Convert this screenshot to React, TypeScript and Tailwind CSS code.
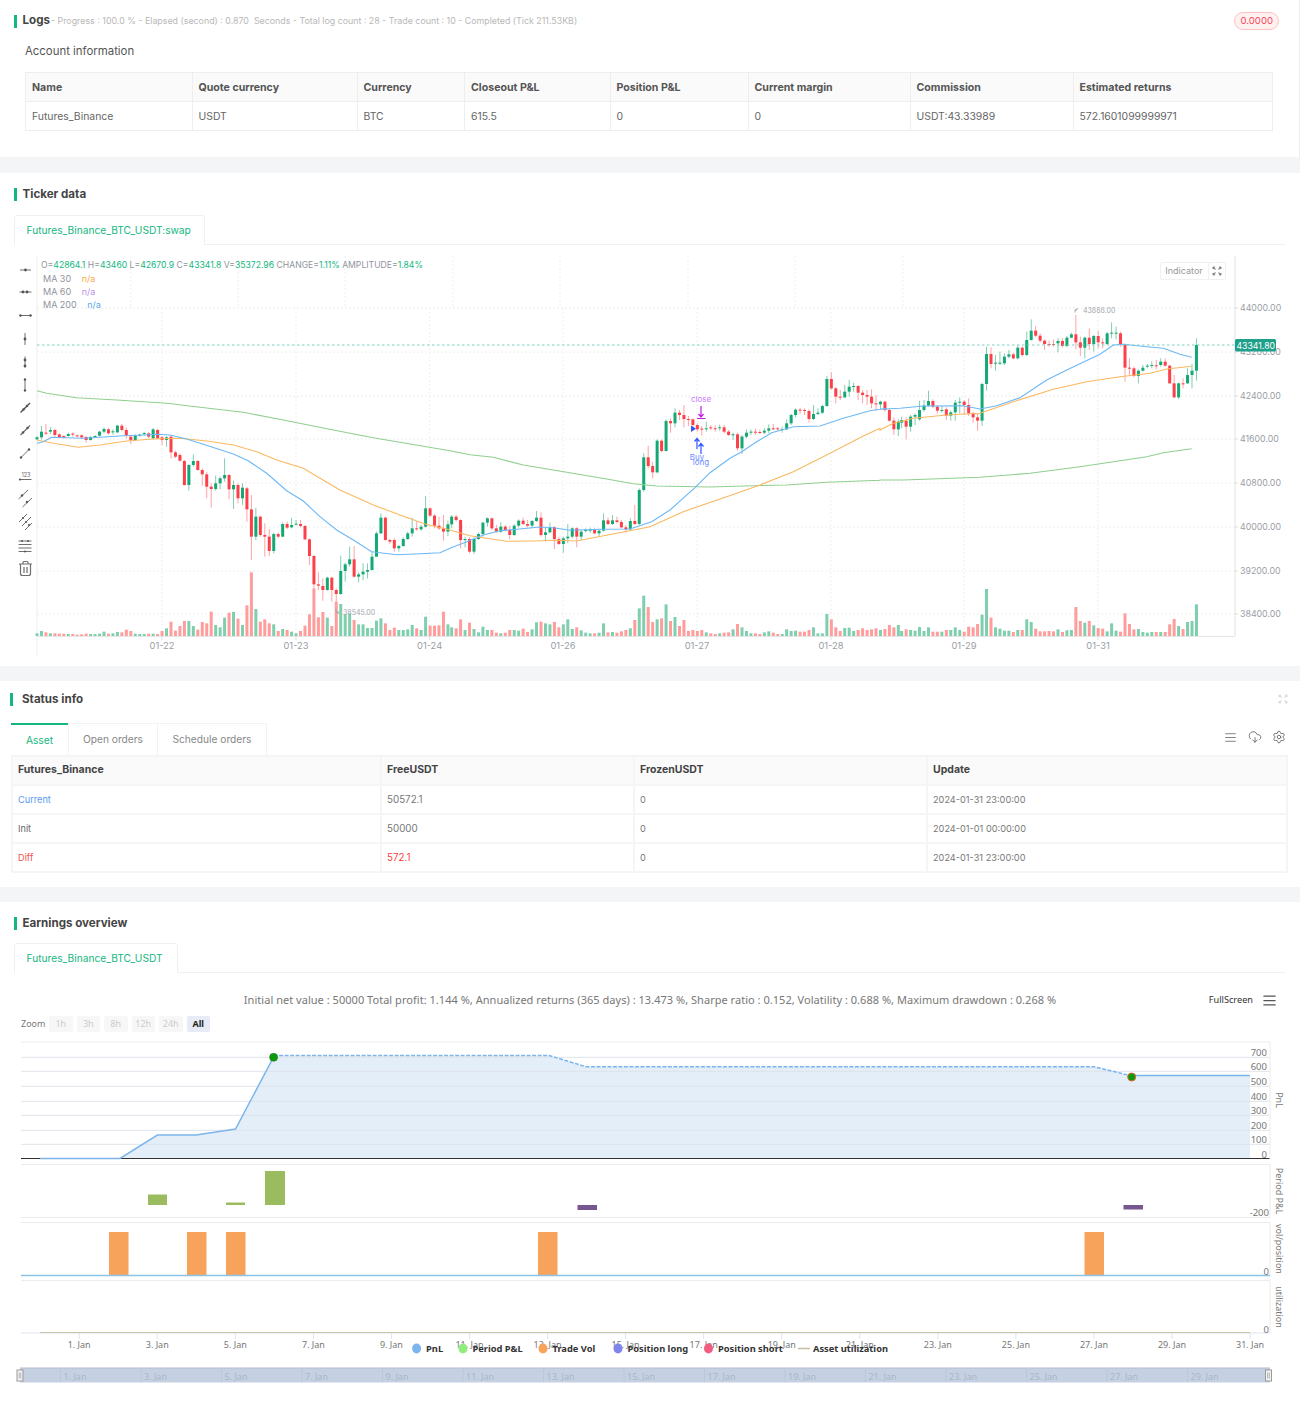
import { AlignJustify, CloudDownload, Settings } from "lucide-react";

type Bar = number[];

// candles traced from the chart: [open, close, high, low], screen units of each trace
const SEG_A: Bar[] = [
  [298,292,288,300],[292,275,258,298],[278,281,252,285],[275,270,262,282],[270,285,266,292],[283,292,280,295],[288,292,285,296],[288,282,278,290],[281,284,277,290],[286,288,284,292],
  [286,292,283,297],[291,300,288,308],[300,291,288,302],[290,288,285,292],[287,275,272,290],[275,267,262,280],[268,280,264,284],[276,274,268,284],[277,257,254,280],[257,270,252,274],
  [270,287,262,295],[290,300,286,312],[300,287,283,303],[286,284,281,290],[281,279,276,288],[280,290,276,295],[295,268,264,298],[270,295,266,298],[292,300,288,315],[300,292,288,320],
  [290,337,285,355],[337,350,332,355],[345,362,340,365],[363,435,360,437],[435,375,372,452],[375,363,343,380],[363,390,360,392],[390,403,385,437],[403,440,395,475],[440,447,430,503],
  [447,430,407,452],[430,415,410,448],[415,405,355,425],[405,448,402,478],[448,435,422,507],[435,475,430,490],[475,443,430,495],[445,508,440,545],[508,590,465,660],[590,530,503,600],
  [530,585,527,590],[585,590,550,650],[590,633,567,648],[633,582,578,640],[582,590,578,595],[590,552,548,592],[552,563,545,567],[562,555,533,565],[553,551,540,556],[552,558,540,562],
  [558,598,555,600],[598,648,595,675],[648,733,645,745],[733,737,697,750],[738,750,715,782],[750,713,710,752],[713,750,710,785],[750,762,745,800],[762,693,647,765],[693,673,668,725],
  [673,658,620,680],[658,710,618,712],[710,703,697,727],[703,695,670,720],[695,690,670,715],[690,650,635,692],[650,580,575,650],[580,533,520,582],[533,600,530,602],[600,605,597,612],
  [600,625,595,635],[625,618,615,635],[618,597,592,620],[597,580,575,600],[580,565,533,590],[565,567,545,572],[568,560,555,572],[560,505,468,562],[505,527,502,530],[527,557,522,565],
  [557,565,530,570],[565,575,525,602],[575,553,542,588],
];
const SEG_B: Bar[] = [
  [553,530,525,565],[530,540,525,545],[540,600,538,625],[600,597,590,622],[597,635,592,640],[635,597,593,642],[597,582,578,600],[582,548,545,590],[548,535,532,560],[535,565,532,570],
  [565,575,555,578],[575,560,547,578],[560,570,555,575],[570,585,557,598],[585,557,553,588],[557,542,538,562],[542,552,533,555],[552,557,540,562],[557,543,540,565],[543,533,513,546],
  [533,585,517,590],[585,577,563,605],[577,562,548,580],[562,597,558,627],[597,612,590,615],[612,595,590,638],[595,590,552,610],[590,565,562,595],[565,590,562,622],[590,575,570,600],
  [573,570,565,578],[571,569,563,578],[570,580,565,583],[580,572,568,590],[572,541,520,575],[541,552,532,555],[552,541,525,555],[541,546,530,550],[546,562,540,565],[562,568,555,578],
  [568,543,535,572],[543,552,495,555],[552,450,445,555],[450,352,340,455],[352,378,317,385],[378,397,365,415],[397,302,298,400],[302,333,298,337],[333,243,238,335],[243,250,235,278],
  [250,218,205,262],[218,225,210,240],[225,237,195,262],[237,238,228,258],[238,255,235,270],[255,268,250,275],[266,268,258,287],[268,265,245,275],[262,264,255,270],[265,267,256,275],
  [265,262,254,272],[262,275,255,280],[275,285,270,288],[285,283,278,300],[283,325,278,332],[325,290,285,342],[290,278,268,295],[278,275,268,285],[275,277,266,285],[276,278,268,282],
  [278,272,265,282],[272,265,253,280],[265,267,252,270],[265,268,260,272],[268,267,260,278],[268,250,238,270],[250,225,222,255],[225,209,205,232],[209,211,203,222],[210,213,205,225],
  [213,237,208,248],[237,222,195,240],[222,218,205,225],[218,198,195,222],[198,117,108,200],[117,145,97,150],[145,170,140,190],[170,172,150,180],[172,155,135,175],[155,140,120,170],
  [140,138,128,155],[138,158,135,180],[158,165,150,190],[165,170,150,195],[170,190,148,205],[190,193,165,212],[193,185,182,210],[185,210,182,215],[210,242,205,245],[242,268,232,285],
  [268,245,238,288],
];
const SEG_C: Bar[] = [
  [368,360,350,385],[362,380,352,418],[380,350,345,395],[350,345,340,375],[358,330,302,362],[330,317,300,335],[317,303,272,320],[303,320,298,325],[320,332,315,340],[332,330,318,338],
  [328,347,322,360],[347,337,332,362],[337,308,300,362],[308,305,292,340],[305,315,300,345],[315,340,295,348],[340,352,335,368],[352,362,340,392],[362,252,248,378],[252,162,140,272],
  [162,192,142,205],[190,188,165,212],[190,188,155,195],[190,170,160,195],[170,163,150,175],[163,175,158,178],[175,143,135,178],[143,165,140,170],[165,120,95,168],[120,92,58,122],
  [92,107,78,112],[107,122,100,128],[122,132,118,150],[132,133,122,140],[132,134,118,140],[130,123,115,157],[123,138,115,142],[138,113,108,142],[113,103,98,115],[103,127,45,148],
  [127,143,110,168],[143,113,110,175],[113,132,85,150],[132,108,105,155],[108,127,92,145],[127,130,115,145],[132,100,95,135],[100,98,67,115],[100,98,80,118],[100,135,95,140],
  [135,203,130,245],[203,205,175,225],[205,228,200,232],[228,212,208,250],[212,203,195,215],[200,197,192,205],[197,195,183,205],[196,198,180,208],[195,185,175,200],[185,197,175,200],
  [197,250,195,252],[250,292,225,295],[292,250,248,297],[250,252,235,265],[250,225,205,252],[225,212,192,265],[212,135,115,242],
];

const VOL_A = [
  880,873,877,880,880,881,881,882,882,884,883,881,882,882,881,875,881,880,876,877,869,873,881,882,882,881,881,882,873,865,
  845,872,858,843,843,858,869,846,850,815,855,862,833,818,816,836,855,796,
  697,807,845,838,850,853,873,867,870,875,880,873,857,823,745,832,816,833,858,785,792,822,820,840,853,853,864,864,842,835,850,870,863,870,870,868,855,865,870,830,857,857,856,815,853,
];
const VOL_B = [
  862,865,838,870,848,867,877,860,870,870,878,880,878,870,870,872,866,876,868,847,845,850,853,846,862,853,838,867,862,871,878,880,880,878,850,877,876,878,874,870,865,840,805,767,801,846,838,835,793,843,831,858,840,873,870,873,870,877,880,882,880,878,877,868,852,862,873,880,880,882,877,874,878,882,882,868,873,872,875,875,870,862,880,880,822,838,862,873,864,863,873,870,865,870,868,865,870,867,855,862,855,
];
const VOL_C = [
  993,988,990,992,981,993,982,995,995,995,990,990,982,990,995,980,982,972,944,867,953,982,986,992,992,996,990,990,958,966,986,994,994,993,994,988,996,991,990,921,963,968,963,976,984,986,994,970,992,995,940,972,988,987,996,998,996,996,996,996,973,957,978,987,966,963,913,
];

const STEP = 13.4 / 3;
const SEGS = [
  { bars: SEG_A, vols: VOL_A, x0: 37, off: 0 },
  { bars: SEG_B, vols: VOL_B, x0: 451.67, off: 0 },
  { bars: SEG_C, vols: VOL_C, x0: 901.67, off: 120 },
];

const toLine = (pts: number[][], xo: number, off = 0) =>
  pts.map(([x, y]) => `${(xo + x / 3).toFixed(1)},${(340 + (y - off) / 3).toFixed(1)}`).join(" ");

const MA30 = [
  toLine([[111,310],[130,305],[155,292],[250,295],[300,292],[370,287],[430,285],[470,283],[510,285],[560,297],[610,313],[700,342],[745,362],[800,400],[860,452],[910,483],[960,530],[1010,570],[1060,600],[1115,635],[1190,644],[1260,641],[1320,638],[1350,625]], 0),
  toLine([[50,605],[100,585],[150,572],[200,568],[270,561],[310,563],[360,571],[450,568],[540,567],[605,545],[660,510],[735,443],[780,398],[840,355],[875,335],[920,305],[965,278],[1030,260],[1110,258],[1180,235],[1260,212],[1310,205]], 450),
  toLine([[0,328],[60,325],[130,318],[250,317],[300,327],[350,317],[420,293],[500,240],[560,210],[660,163],[700,135],[730,133],[800,140],[850,145],[900,163],[935,172]], 880, 120),
].join(" ");
const MA60 = [
  toLine([[111,300],[160,310],[235,322],[300,315],[380,303],[460,297],[540,295],[620,303],[700,315],[770,335],[830,360],[910,385],[960,415],[1020,450],[1120,495],[1200,525],[1275,552],[1350,570]], 0),
  toLine([[60,587],[170,604],[250,603],[320,601],[380,603],[430,593],[520,576],[600,560],[700,515],[830,470],[930,435],[1030,395],[1130,345],[1240,288],[1290,265]], 450),
  toLine([[0,390],[40,370],[100,355],[200,345],[300,340],[400,305],[520,268],[620,245],[720,230],[810,220],[860,207],[935,199]], 880, 120),
].join(" ");
const MA200 = [
  toLine([[111,152],[140,160],[230,173],[350,180],[500,190],[600,202],[730,217],[850,240],[1000,270],[1120,293],[1350,332]], 0),
  toLine([[60,344],[130,352],[220,375],[350,397],[470,417],[550,431],[620,438],[780,441],[880,438],[1010,435],[1130,427],[1290,421]], 450),
  toLine([[0,540],[70,540],[300,532],[450,520],[600,500],[700,485],[800,470],[850,458],[935,446]], 880, 120),
].join(" ");

const PRICE_TICKS: [string, number][] = [["44000.00",308],["43200.00",352],["42400.00",396],["41600.00",439],["40800.00",483],["40000.00",527],["39200.00",571],["38400.00",614]];
const DATE_TICKS: [string, number][] = [["01-22",162],["01-23",296],["01-24",429.6],["01-26",563],["01-27",697],["01-28",831],["01-29",964],["01-31",1098]];
const TOP_GRID = [130.7, 238, 345, 453, 560, 688, 795, 903];

function ToolIcons() {
  const s = { stroke: "#6f6f6f", strokeWidth: 1, fill: "none" };
  const d = (cx: number, cy: number, r = 1.4) => <circle cx={cx} cy={cy} r={r} fill="#555" />;
  return (
    <g>
      <path d="M20 270h11" {...s} />{d(25.5, 270)}
      <path d="M19.5 292h12" {...s} />{d(23, 292)}{d(27, 292)}
      <path d="M19.5 315.5h12" {...s} />{d(20.5, 315.5, 1.2)}{d(30.5, 315.5, 1.2)}
      <path d="M25 333v12" {...s} />{d(25, 339)}
      <path d="M25 356.5v11" {...s} />{d(25, 360)}{d(25, 366)}
      <path d="M25 379v12" {...s} />{d(25, 379.5, 1.2)}{d(25, 390.5, 1.2)}
      <path d="M20.5 412.5l9.5-9.5" stroke="#555" strokeWidth={1.4} fill="none" />{d(23.5, 409.5, 1.2)}{d(27, 406, 1.2)}
      <path d="M20.5 435l9.5-9.5" {...s} strokeWidth={1.3} />{d(23, 432.5, 1.2)}{d(27.5, 428, 1.2)}
      <path d="M20.5 458l9-9" {...s} />{d(21, 457.5, 1.2)}{d(29, 449.5, 1.2)}
      <path d="M19.5 479.5h12" {...s} />{d(20, 479.5, 1.1)}
      <text x="26" y="477" fontSize="5.5" textAnchor="middle" fill="#666">123</text>
      <path d="M18.5 499l9.5-9M22.5 507l9.5-9" {...s} />{d(22, 495.5, 1.2)}{d(27, 502, 1.2)}
      <path d="M19 522l8-8M22 526l9-9M25 530l7-7" {...s} />{d(23, 518, 1.1)}{d(26, 522, 1.1)}{d(29, 525, 1.1)}
      <path d="M18.5 541h13M18.5 544.5h13M18.5 548h13M18.5 551.5h13" {...s} />{d(22, 541, 1)}{d(28, 541, 1)}{d(25, 551.5, 1)}
      <path d="M19 564h13M23 564v-1.5q0-1 1-1h3q1 0 1 1v1.5M20.5 564v9.5q0 2 2 2h6q2 0 2-2v-9.5M24 567v6M27 567v6" {...s} strokeWidth={1.2} />
    </g>
  );
}

function KLineChart() {
  return (
    <svg width={1300} height={405} viewBox="0 255 1300 405" className="block">
      {PRICE_TICKS.map(([, y]) => (
        <line key={y} x1={37} x2={1235} y1={y} y2={y} stroke="#eeeeee" strokeDasharray="2 2" />
      ))}
      {TOP_GRID.map((x) => (
        <line key={x} x1={x} x2={x} y1={256} y2={308} stroke="#efefef" strokeDasharray="2 2" />
      ))}
      {DATE_TICKS.map(([, x]) => (
        <line key={x} x1={x} x2={x} y1={308} y2={636} stroke="#efefef" strokeDasharray="2 2" />
      ))}
      <line x1={37} x2={37} y1={256} y2={656} stroke="#eeeeee" />
      <line x1={1235} x2={1235} y1={256} y2={636} stroke="#e2e2e2" />
      <line x1={37} x2={1235} y1={636.5} y2={636.5} stroke="#e6e6e6" />
      <ToolIcons />

      {SEGS.map((seg, si) =>
        seg.vols.map((v, i) => {
          const bar = seg.bars[i];
          const x = seg.x0 + i * STEP;
          const top = 340 + (v - seg.off) / 3;
          return (
            <rect key={`v${si}-${i}`} x={x - 1.5} y={top} width={3} height={636 - top} fill={bar[1] <= bar[0] ? "#7fcfae" : "#ff9c9c"} />
          );
        }),
      )}
      {SEGS.map((seg, si) =>
        seg.bars.map(([o, c, h, l], i) => {
          const x = seg.x0 + i * STEP;
          const y = (v: number) => 340 + (v - seg.off) / 3;
          const up = c <= o;
          const top = y(Math.min(o, c));
          return (
            <g key={`c${si}-${i}`}>
              <line x1={x} x2={x} y1={y(h)} y2={y(l)} stroke={up ? "#7fcfae" : "#ffa3a6"} />
              <rect x={x - 1.5} y={top} width={3} height={Math.max(1, Math.abs(c - o) / 3)} fill={up ? "#14a874" : "#fb4049"} />
            </g>
          );
        }),
      )}

      <polyline points={MA200} fill="none" stroke="#8fcf8f" strokeWidth={1.1} />
      <polyline points={MA60} fill="none" stroke="#fbb860" strokeWidth={1.1} />
      <polyline points={MA30} fill="none" stroke="#6cb8f6" strokeWidth={1.1} />

      <line x1={37} x2={1235} y1={345} y2={345} stroke="#7fd0c2" strokeDasharray="2.5 2.5" />
      {PRICE_TICKS.map(([label, y]) => (
        <g key={label}>
          <line x1={1235} x2={1238} y1={y} y2={y} stroke="#dddddd" />
          <text x={1240} y={y + 3.2} fontSize="8.8" fill="#9a9ea6">{label}</text>
        </g>
      ))}
      <rect x={1235} y={339} width={41} height={12.5} rx={1.5} fill="#1fa08a" />
      <text x={1236.5} y={348.5} fontSize="8.7" fill="#ffffff">43341.80</text>

      {DATE_TICKS.map(([label, x]) => (
        <g key={label}>
          <line x1={x} x2={x} y1={636} y2={640} stroke="#dddddd" />
          <text x={x} y={648.5} fontSize="9.3" textAnchor="middle" fill="#9a9ea6">{label}</text>
        </g>
      ))}

      <text x={1083} y={312.5} fontSize="7" fill="#a3a7ae">43888.00</text>
      <path d="M1075 312.5v-2.5h2M1075 310l3-1.5" stroke="#a3a7ae" fill="none" />
      <text x={343} y={614.5} fontSize="7" fill="#a3a7ae">38545.00</text>
      <path d="M336 609v3h3M336 612l3 1.5" stroke="#a3a7ae" fill="none" />

      <text x={701} y={402} fontSize="8" textAnchor="middle" fill="#c77dff">close</text>
      <path d="M701 406v11M698.5 414l2.5 3 2.5-3M697 418.5h8.5" stroke="#c020e0" strokeWidth={1.2} fill="none" />
      <path d="M691 425.5l5 3.2-5 3.2z" fill="#2f55ff" />
      <path d="M697 449v-10M694.5 441.5l2.5-3 2.5 3M701 454v-10M698.5 446.5l2.5-3 2.5 3" stroke="#2f55ff" strokeWidth={1.2} fill="none" />
      <text x={697} y={460} fontSize="8" textAnchor="middle" fill="#6e8cff">Buy</text>
      <text x={701} y={465} fontSize="8" textAnchor="middle" fill="#6e8cff">long</text>
    </svg>
  );
}

function SectionTitle({ title, barLeft, titleLeft = "ml-[5.5px]", children }: { title: string; barLeft: string; titleLeft?: string; children?: React.ReactNode }) {
  return (
    <div className={`flex h-[18px] items-center ${barLeft}`}>
      <span className="h-[13px] w-[3px] shrink-0 bg-[#13b77f]" />
      {children ? children : <h2 className={`${titleLeft} mt-[1px] text-[11.6px] font-bold text-[#444]`}>{title}</h2>}
    </div>
  );
}

function ExpandIcon({ color }: { color: string }) {
  return (
    <svg width="10" height="10" viewBox="0 0 10 10" fill="none" stroke={color} strokeWidth="1.1">
      <path d="M1 1l2.5 2.5M1 1h2M1 1v2M9 1L6.5 3.5M9 1H7M9 1v2M1 9l2.5-2.5M1 9h2M1 9V7M9 9L6.5 6.5M9 9H7M9 9V7" />
    </svg>
  );
}

const ACCOUNT_COLS = ["w-[166.5px]", "w-[165px]", "w-[107.5px]", "w-[145.5px]", "w-[138px]", "w-[162px]", "w-[163px]", "w-auto"];
const ACCOUNT_HEAD = ["Name", "Quote currency", "Currency", "Closeout P&L", "Position P&L", "Current margin", "Commission", "Estimated returns"];
const ACCOUNT_ROW = ["Futures_Binance", "USDT", "BTC", "615.5", "0", "0", "USDT:43.33989", "572.1601099999971"];

const ASSET_ROWS = [
  { name: "Current", nameCls: "text-[#5a9cf0]", free: "50572.1", freeCls: "text-[#777]", update: "2024-01-31 23:00:00" },
  { name: "Init", nameCls: "text-[#666]", free: "50000", freeCls: "text-[#777]", update: "2024-01-01 00:00:00" },
  { name: "Diff", nameCls: "text-[#f0524f]", free: "572.1", freeCls: "text-[#fa3f3f]", update: "2024-01-31 23:00:00" },
];

const GRID_Y = [1057.3, 1071.3, 1086.3, 1101.3, 1115.3, 1130.3, 1144.3];
const PNL_LABELS: [string, number][] = [["700",1056],["600",1070],["500",1085],["400",1100],["300",1114],["200",1129],["100",1143],["0",1158]];
const DAYS = [1,3,5,7,9,11,13,15,17,19,21,23,25,27,29,31];
const NAV_DAYS = [1,3,5,7,9,11,13,15,17,19,21,23,25,27,29];
const dayX = (d: number) => 79.2 + (d - 1) * 39.03;

function EarningsChart() {
  const paneEdge = "#ececec";
  const labelFont = "'Noto Sans', sans-serif";
  return (
    <svg width={1300} height={364} viewBox="0 1040 1300 364" className="block" style={{ fontFamily: labelFont }}>
      {/* pnl pane */}
      <path d="M40 1158.5H120L157.4 1135H196L235.5 1129L273.6 1056H549L586 1066.7H1094L1132 1076L1250 1075.5V1158.5Z" fill="#e4eef9" />
      <line x1={21} x2={1270} y1={1042} y2={1042} stroke={paneEdge} />
      {GRID_Y.map((y) => (
        <line key={y} x1={21} x2={1270} y1={y} y2={y} stroke="#dfe3e8" />
      ))}
      <line x1={21} x2={1270} y1={1158.5} y2={1158.5} stroke="#333" />
      <line x1={1270} x2={1270} y1={1042} y2={1159} stroke={paneEdge} />
      <path d="M40 1158.5H120L157.4 1135H196L235.5 1129L273.6 1057" fill="none" stroke="#7cb5ec" strokeWidth={1.5} />
      <path d="M273.6 1055.5H549L586 1066.7H1094L1132 1076" fill="none" stroke="#7cb5ec" strokeWidth={1.5} strokeDasharray="4 1.5" />
      <path d="M1132 1075.5H1250" fill="none" stroke="#7cb5ec" strokeWidth={1.5} />
      <circle cx={273.6} cy={1057.3} r={4} fill="#0a9a0a" stroke="#2a7a2a" strokeWidth={0.6} />
      <circle cx={1131.7} cy={1077} r={4} fill="#0a9a0a" stroke="#e0653a" strokeWidth={1} />
      {PNL_LABELS.map(([l, y]) => (
        <text key={l} x={1267} y={y} fontSize="9.5" textAnchor="end" fill="#777">{l}</text>
      ))}

      {/* period pnl pane */}
      <path d="M21 1164.5H1270V1217.5H21" fill="none" stroke={paneEdge} />
      <rect x={148} y={1194.5} width={19} height={10.5} fill="#9bbb5f" />
      <rect x={226} y={1202.5} width={19} height={2.5} fill="#9bbb5f" />
      <rect x={265} y={1171} width={20} height={34} fill="#9bbb5f" />
      <rect x={577.5} y={1205} width={19.5} height={5} fill="#76578f" />
      <rect x={1123.5} y={1205} width={19.5} height={4.5} fill="#76578f" />
      <text x={1269} y={1216} fontSize="9.5" textAnchor="end" fill="#777">-200</text>

      {/* vol pane */}
      <path d="M21 1222.5H1270V1275.5" fill="none" stroke={paneEdge} />
      {[109, 187, 226, 538, 1084.5].map((x) => (
        <rect key={x} x={x} y={1232} width={19.5} height={43.5} fill="#f7a35c" />
      ))}
      <line x1={21} x2={1270} y1={1275.5} y2={1275.5} stroke="#8cc4e6" strokeWidth={1.3} />
      <text x={1269} y={1275} fontSize="9.5" textAnchor="end" fill="#777">0</text>

      {/* utilization pane */}
      <path d="M21 1280.5H1270V1333" fill="none" stroke={paneEdge} />
      <line x1={21} x2={1270} y1={1333} y2={1333} stroke="#dde3f0" />
      <line x1={40} x2={1250} y1={1332.5} y2={1332.5} stroke="#c9c4a8" strokeWidth={1.2} />
      <text x={1269} y={1333} fontSize="9.5" textAnchor="end" fill="#777">0</text>

      {DAYS.map((d) => (
        <g key={d}>
          <line x1={dayX(d)} x2={dayX(d)} y1={1333} y2={1339} stroke="#dde3f0" />
          <text x={dayX(d)} y={1348} fontSize="9" textAnchor="middle" fill="#777">{`${d}. Jan`}</text>
        </g>
      ))}

      {([["PnL", 1100], ["Period P&L", 1191], ["vol/position", 1249], ["utilization", 1307]] as [string, number][]).map(([l, y]) => (
        <text key={l} x={1276} y={y} fontSize="9" textAnchor="middle" fill="#777" transform={`rotate(90 1276 ${y})`}>{l}</text>
      ))}

      {/* legend */}
      {([["PnL", 416.6, "#7cb5ec"], ["Period P&L", 463, "#90ed7d"], ["Trade Vol", 543, "#f7a35c"], ["Position long", 618, "#8085e9"], ["Position short", 708.5, "#f15c80"]] as [string, number, string][]).map(([l, x, c]) => (
        <g key={l}>
          <ellipse cx={x} cy={1348.5} rx={4.5} ry={5} fill={c} />
          <text x={x + 9.5} y={1352} fontSize="9.3" fontWeight={700} fill="#333">{l}</text>
        </g>
      ))}
      <line x1={798} x2={810} y1={1348.5} y2={1348.5} stroke="#c5bd9b" strokeWidth={1.5} />
      <text x={813} y={1352} fontSize="9.3" fontWeight={700} fill="#333">Asset utilization</text>

      {/* navigator */}
      <rect x={20} y={1368} width={1250} height={14.5} fill="#c5d1e3" />
      <line x1={20} x2={1270} y1={1368} y2={1368} stroke="#b3bdcc" />
      {NAV_DAYS.map((d, i) => (
        <g key={d}>
          <line x1={60.5 + i * 80.5} x2={60.5 + i * 80.5} y1={1368} y2={1382} stroke="#bcc8da" />
          <text x={63.5 + i * 80.5} y={1380} fontSize="9" fill="#aab6c9">{`${d}. Jan`}</text>
        </g>
      ))}
      {[17, 1265.5].map((x) => (
        <g key={x}>
          <rect x={x} y={1370} width={6} height={11} fill="#f4f4f4" stroke="#999" />
          <path d={`M${x + 2.2} 1372.5v6M${x + 3.8} 1372.5v6`} stroke="#999" strokeWidth={0.7} />
        </g>
      ))}
    </svg>
  );
}

export default function App() {
  return (
    <div className="flex min-h-[1404px] w-[1300px] flex-col bg-[#f4f5f7] font-['Inter',sans-serif] text-[10.4px] text-[#666]">
      {/* logs */}
      <section className="mb-[16px] h-[157px] border-r border-[#eeeeee] bg-white pt-[12px]">
        <div className="flex h-[18px] items-center justify-between pr-[20px]">
          <SectionTitle title="Logs" barLeft="ml-[14px]">
            <h2 className="ml-[5.5px] text-[11.6px] font-bold text-[#444]">Logs</h2>
            <span className="ml-[1px] text-[8.85px] text-[#b8b8b8]">- Progress : 100.0 % - Elapsed (second) : 0.870&nbsp; Seconds - Total log count : 28 - Trade count : 10 - Completed (Tick 211.53KB)</span>
          </SectionTitle>
          <span className="rounded-full border border-[#ffc2c2] bg-[#fff1f0] px-[5px] py-[1px] text-[9.6px] leading-[14px] text-[#f5475b]">0.0000</span>
        </div>
        <p className="ml-[25px] mt-[12px] h-[18px] text-[11.4px] leading-[18px] text-[#555]">Account information</p>
        <div className="ml-[25px] mt-[12px] w-[1248px]">
          <table className="w-full table-fixed border-collapse">
            <thead>
              <tr className="bg-[#fafafa]">
                {ACCOUNT_HEAD.map((h, i) => (
                  <th key={h} className={`${ACCOUNT_COLS[i]} h-[29px] border border-[#eeeeee] px-[6px] pt-[2px] text-left text-[10.6px] font-bold text-[#555]`}>{h}</th>
                ))}
              </tr>
            </thead>
            <tbody>
              <tr>
                {ACCOUNT_ROW.map((c, i) => (
                  <td key={i} className="h-[29px] border border-[#eeeeee] px-[6px] pt-[2px]">{c}</td>
                ))}
              </tr>
            </tbody>
          </table>
        </div>
      </section>

      {/* ticker */}
      <section className="mb-[15px] h-[493px] bg-white pt-[12px]">
        <SectionTitle title="Ticker data" barLeft="ml-[14px]" />
        <div className="ml-[13.5px] mr-[15px] mt-[12px] flex h-[30px]">
          <div className="flex w-[191.5px] items-center rounded-t-[3px] border border-b-0 border-[#f0f0f0] pl-[12px] text-[10.2px] text-[#13b77f]">Futures_Binance_BTC_USDT:swap</div>
          <div className="flex-1 border-b border-[#f0f0f0]" />
        </div>
        <div className="relative mt-[10px]">
          <KLineChart />
          <div className="absolute left-[41px] top-[4px] text-[9px] leading-[13px] text-[#8f949c]">
            <p className="whitespace-nowrap text-[8.65px]">
              O=<span className="text-[#13b77f]">42864.1</span> H=<span className="text-[#13b77f]">43460</span> L=<span className="text-[#13b77f]">42670.9</span> C=<span className="text-[#13b77f]">43341.8</span> V=<span className="text-[#13b77f]">35372.96</span> CHANGE=<span className="text-[#13b77f]">1.11%</span> AMPLITUDE=<span className="text-[#13b77f]">1.84%</span>
            </p>
            <p className="ml-[2px]">MA 30 <span className="ml-[8px] text-[#fba94b]">n/a</span></p>
            <p className="ml-[2px]">MA 60 <span className="ml-[8px] text-[#b98ee6]">n/a</span></p>
            <p className="ml-[2px]">MA 200 <span className="ml-[8px] text-[#5aa8f0]">n/a</span></p>
          </div>
          <div className="absolute left-[1159.5px] top-[7px] flex h-[18px] w-[66px] items-center rounded-[2px] border border-[#f0f0f0] bg-white text-[9px] text-[#999]">
            <span className="w-[47px] text-center">Indicator</span>
            <span className="flex h-full flex-1 items-center justify-center border-l border-[#f0f0f0]"><ExpandIcon color="#888" /></span>
          </div>
        </div>
      </section>

      {/* status */}
      <section className="mb-[15px] h-[206px] bg-white pt-[9px]">
        <div className="flex items-center justify-between pr-[12px]">
          <SectionTitle title="Status info" barLeft="ml-[10px]" titleLeft="ml-[9px]" />
          <ExpandIcon color="#dcdcdc" />
        </div>
        <div className="ml-[11px] mr-[12px] mt-[15px]">
          <div className="flex h-[32px] items-stretch justify-between">
            <div className="flex text-[10.2px]">
              <span className="flex w-[57px] items-center justify-center border-t-2 border-[#13b77f] pt-[1px] text-[#13b77f]">Asset</span>
              <span className="flex w-[90px] items-center justify-center border-x border-t border-[#f2f2f2] pt-[1px] text-[#888]">Open orders</span>
              <span className="flex w-[109px] items-center justify-center border-r border-t border-[#f2f2f2] pt-[1px] text-[#888]">Schedule orders</span>
            </div>
            <div className="flex items-center gap-[10px] pb-[4px] pr-[2px] text-[#666]">
              <AlignJustify size={13} strokeWidth={1.5} />
              <CloudDownload size={14} strokeWidth={1.5} className="ml-[1px]" />
              <Settings size={14} strokeWidth={1.5} />
            </div>
          </div>
          <table className="w-full table-fixed border-collapse">
            <thead>
              <tr className="bg-[#fafafa] text-[10.5px]">
                <th className="h-[29px] w-[369px] border-2 border-[#f5f5f5] px-[5px] pb-[1px] text-left font-bold text-[#444]">Futures_Binance</th>
                <th className="w-[253px] border-2 border-[#f5f5f5] px-[5px] pb-[1px] text-left font-bold text-[#444]">FreeUSDT</th>
                <th className="w-[293px] border-2 border-[#f5f5f5] px-[5px] pb-[1px] text-left font-bold text-[#444]">FrozenUSDT</th>
                <th className="border-2 border-[#f5f5f5] px-[5px] pb-[1px] text-left font-bold text-[#444]">Update</th>
              </tr>
            </thead>
            <tbody className="text-[9.2px]">
              {ASSET_ROWS.map((r) => (
                <tr key={r.name}>
                  <td className={`h-[29px] border-2 border-[#f5f5f5] px-[5px] ${r.nameCls}`}>{r.name}</td>
                  <td className={`border-2 border-[#f5f5f5] px-[5px] pt-[2px] text-[9.8px] ${r.freeCls}`}>{r.free}</td>
                  <td className="border-2 border-[#f5f5f5] px-[5px] text-[#777]">0</td>
                  <td className="border-2 border-[#f5f5f5] px-[5px] text-[#777]">{r.update}</td>
                </tr>
              ))}
            </tbody>
          </table>
        </div>
      </section>

      {/* earnings */}
      <section className="flex-1 bg-white pt-[12px]">
        <SectionTitle title="Earnings overview" barLeft="ml-[14px]" />
        <div className="ml-[13.5px] mr-[15px] mt-[11px] flex h-[30px]">
          <div className="flex w-[164px] items-center rounded-t-[3px] border border-b-0 border-[#f0f0f0] pl-[12px] text-[10.2px] text-[#13b77f]">Futures_Binance_BTC_USDT</div>
          <div className="flex-1 border-b border-[#f0f0f0]" />
        </div>
        <div className="mt-[18px] grid h-[18px] grid-cols-[1fr_auto_1fr] items-center font-['Noto_Sans',sans-serif]">
          <span />
          <p className="text-[11px] tracking-[0.03px] text-[#777]">Initial net value : 50000 Total profit: 1.144 %, Annualized returns (365 days) : 13.473 %, Sharpe ratio : 0.152, Volatility : 0.688 %, Maximum drawdown : 0.268 %</p>
          <div className="flex items-center justify-end gap-[9px] pr-[23px]">
            <span className="text-[9.2px] text-[#333]">FullScreen</span>
            <AlignJustify size={15} strokeWidth={2} className="text-[#555]" />
          </div>
        </div>
        <div className="ml-[21px] mt-[7px] flex h-[16px] items-stretch gap-[4px] font-['Noto_Sans',sans-serif] text-[9px]">
          <span className="flex w-[24px] items-center text-[#777]">Zoom</span>
          {["1h", "3h", "8h", "12h", "24h"].map((z) => (
            <span key={z} className="flex w-[23.5px] items-center justify-center rounded-[2px] bg-[#f7f7f7] text-[#cccccc]">{z}</span>
          ))}
          <span className="flex w-[23.5px] items-center justify-center rounded-[2px] bg-[#e6ebf5] font-bold text-[#222]">All</span>
        </div>
        <div className="mt-[8px]">
          <EarningsChart />
        </div>
      </section>
    </div>
  );
}
